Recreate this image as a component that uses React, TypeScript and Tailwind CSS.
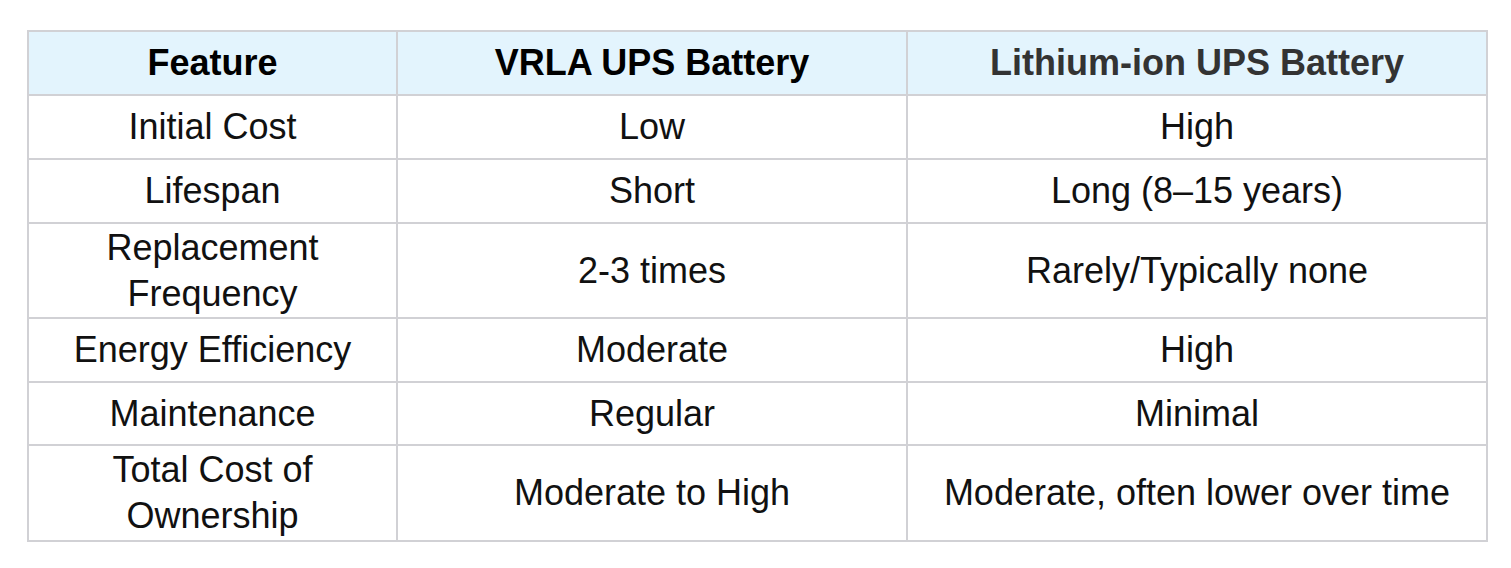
const rows: { h: string; cells: [React.ReactNode, string, string] }[] = [
  { h: "h-[64px]", cells: ["Initial Cost", "Low", "High"] },
  { h: "h-[64px]", cells: ["Lifespan", "Short", "Long (8–15 years)"] },
  {
    h: "h-[95px]",
    cells: [
      <>
        Replacement
        <br />
        Frequency
      </>,
      "2-3 times",
      "Rarely/Typically none",
    ],
  },
  { h: "h-[64px]", cells: ["Energy Efficiency", "Moderate", "High"] },
  { h: "h-[63px]", cells: ["Maintenance", "Regular", "Minimal"] },
  {
    h: "h-[96px]",
    cells: [
      <>
        Total Cost of
        <br />
        Ownership
      </>,
      "Moderate to High",
      "Moderate, often lower over time",
    ],
  },
];

export default function App() {
  return (
    <div className="min-h-screen bg-white pt-[30px] pl-[27px] font-['Liberation_Sans',Arial,sans-serif]">
      <table className="w-[1459px] table-fixed border-collapse border-2 border-[#d1d1d5] text-[36px] leading-[46px] text-[#111]">
        <colgroup>
          <col className="w-[369px]" />
          <col className="w-[510px]" />
          <col className="w-[580px]" />
        </colgroup>
        <thead>
          <tr className="h-[64px] bg-[#e3f4fd]">
            <th className="border-2 border-[#d1d1d5] p-0 text-center align-middle font-bold text-black">
              Feature
            </th>
            <th className="border-2 border-[#d1d1d5] p-0 text-center align-middle font-bold text-black">
              VRLA UPS Battery
            </th>
            <th className="border-2 border-[#d1d1d5] p-0 text-center align-middle font-bold text-[#333]">
              Lithium-ion UPS Battery
            </th>
          </tr>
        </thead>
        <tbody>
          {rows.map((r, i) => (
            <tr key={i} className={r.h}>
              {r.cells.map((c, j) => (
                <td
                  key={j}
                  className="border-2 border-[#d1d1d5] p-0 text-center align-middle"
                >
                  {c}
                </td>
              ))}
            </tr>
          ))}
        </tbody>
      </table>
    </div>
  );
}
